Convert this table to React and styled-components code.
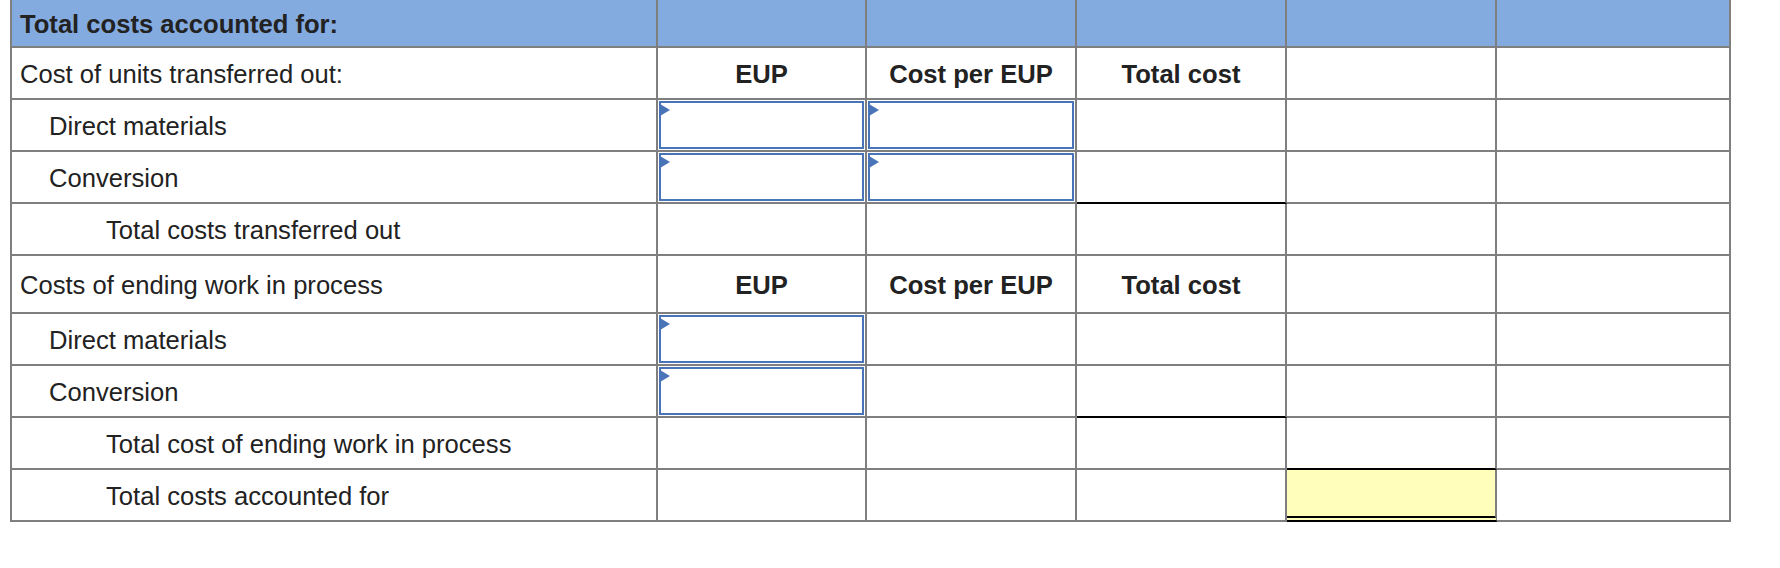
import React from 'react';
import styled, { createGlobalStyle } from 'styled-components';

const GlobalStyle = createGlobalStyle`
  body {
    margin: 0;
    background: #ffffff;
    font-family: "Liberation Sans", Arial, Helvetica, sans-serif;
    color: #222222;
  }
`

const GRID = '#7f7f7f';
const BLUE = '#4a74b8';

const Page = styled.div`
  padding-left: 10px;
`

const Table = styled.div`
  display: flex;
  flex-direction: column;
  width: 1719px;
  border-left: 2px solid ${GRID};
`

const Row = styled.div`
  display: grid;
  grid-template-columns: 646px 209px 210px 210px 210px 234px;
  height: ${p => p.$h}px;
  background: ${p => (p.$header ? '#84abe0' : '#ffffff')};
`

const Cell = styled.div`
  box-sizing: border-box;
  display: flex;
  align-items: center;
  justify-content: ${p => (p.$center ? 'center' : 'flex-start')};
  padding-left: ${p => p.$indent || 0}px;
  padding-top: 2px;
  border-right: 2px solid ${GRID};
  border-bottom: ${p => p.$bottom || `2px solid ${GRID}`};
  background: ${p => p.$fill || 'transparent'};
  font-size: 25.6px;
  font-weight: ${p => (p.$bold ? 700 : 400)};
  white-space: nowrap;
`

const InputCell = styled.div`
  box-sizing: border-box;
  position: relative;
  padding: 1px;
  border-right: 2px solid ${GRID};
  border-bottom: ${p => p.$bottom || `2px solid ${GRID}`};
`

const InputBox = styled.input`
  box-sizing: border-box;
  display: block;
  width: 100%;
  height: 100%;
  margin: 0;
  border: 2px solid ${BLUE};
  border-radius: 0;
  background: #ffffff;
  outline: none;
  font: inherit;
`

const Flag = styled.span`
  position: absolute;
  top: 4px;
  left: 2px;
  width: 0;
  height: 0;
  border-top: 6px solid transparent;
  border-bottom: 6px solid transparent;
  border-left: 10px solid ${BLUE};
`

const BLACK = '2px solid #000000';

const rows = [
  { label: 'Total costs accounted for:', h: 48, header: true, bold: true, indent: 8 },
  { label: 'Cost of units transferred out:', h: 52, indent: 8, heads: true },
  { label: 'Direct materials', h: 52, indent: 37, inputs: [1, 2] },
  { label: 'Conversion', h: 52, indent: 37, inputs: [1, 2], rule: { 3: BLACK } },
  { label: 'Total costs transferred out', h: 52, indent: 94 },
  { label: 'Costs of ending work in process', h: 58, indent: 8, heads: true },
  { label: 'Direct materials', h: 52, indent: 37, inputs: [1] },
  { label: 'Conversion', h: 52, indent: 37, inputs: [1], rule: { 3: BLACK } },
  { label: 'Total cost of ending work in process', h: 52, indent: 94, rule: { 4: BLACK } },
  { label: 'Total costs accounted for', h: 52, indent: 94, total: 4 },
];

const heads = ['EUP', 'Cost per EUP', 'Total cost'];

function InputField({ bottom }) {
  return (
    <InputCell $bottom={bottom}>
      <InputBox type="text" aria-label="amount" />
      <Flag />
    </InputCell>
  );
}

function TableRow({ row }) {
  const cols = [1, 2, 3, 4, 5];
  return (
    <Row $h={row.h} $header={row.header}>
      <Cell $indent={row.indent} $bold={row.bold}>{row.label}</Cell>
      {cols.map(i => {
        const bottom = row.rule ? row.rule[i] : undefined;
        if (row.inputs && row.inputs.includes(i)) {
          return <InputField key={i} bottom={bottom} />;
        }
        if (row.total === i) {
          return <Cell key={i} $fill="#ffffbb" $bottom="6px double #000000" />;
        }
        const text = row.heads && i <= 3 ? heads[i - 1] : null;
        return (
          <Cell key={i} $center $bold $bottom={bottom}>{text}</Cell>
        );
      })}
    </Row>
  );
}

export default function App() {
  return (
    <Page>
      <GlobalStyle />
      <Table>
        {rows.map((row, idx) => (
          <TableRow key={idx} row={row} />
        ))}
      </Table>
    </Page>
  );
}
